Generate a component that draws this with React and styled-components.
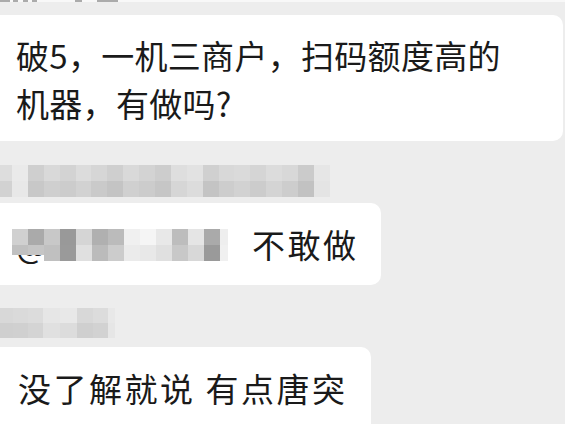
import styled, { createGlobalStyle } from "styled-components";

const GlobalStyle = createGlobalStyle`
    html, body {
        margin: 0;
        padding: 0;
        background: #ededed;
    }
    body {
        font-family: "Noto Sans CJK SC", "Noto Sans", sans-serif;
    }
`;

const Chat = styled.div`
    display: flex;
    flex-direction: column;
    align-items: flex-start;
    width: 565px;
    height: 424px;
    overflow: hidden;
    background: #ededed;
`;

const TopStrip = styled.div`
    display: flex;
    align-items: flex-end;
    align-self: stretch;
    height: 5px;
    background: #f8f8f8;
`;

const Stub = styled.span`
    display: block;
    height: 2px;
    width: ${(p) => p.w}px;
    margin-left: ${(p) => p.gap}px;
    background: #8a8a8a;
    opacity: 0.7;
`;

const Bubble = styled.div`
    display: flex;
    align-items: center;
    box-sizing: border-box;
    margin-top: ${(p) => p.top}px;
    width: ${(p) => (p.width ? `${p.width}px` : "auto")};
    padding: ${(p) => p.pad || "0 24px 0 16px"};
    background: #ffffff;
    border-radius: 0 10px 10px 0;
    color: #1a1a1a;
    font-size: 33px;
    line-height: 48px;
    letter-spacing: ${(p) => p.ls || 0}px;
    white-space: nowrap;
`;

const Mosaic = styled.div`
    display: grid;
    grid-template-columns: ${(p) => p.cols};
    grid-auto-rows: ${(p) => p.rowH}px;
    margin-top: ${(p) => p.top || 0}px;
`;

const Cell = styled.span`
    display: block;
    align-self: start;
    height: ${(p) => p.h || "100%"};
    background: ${(p) => p.c};
`;

const Mention = styled.span`
    position: relative;
    display: inline-block;
    flex: none;
    width: 216px;
    height: 48px;
    margin-left: -4px;
    margin-right: 24px;
`;

const At = styled.span`
    position: absolute;
    left: 4px;
    top: 0;
    font-size: 33px;
    line-height: 48px;
    color: #1a1a1a;
`;

const MentionMosaic = styled(Mosaic)`
    position: absolute;
    left: 0;
    top: 9px;
`;

const stubs = [
    [10, 0], [5, 3], [5, 5], [5, 4], [7, 38], [21, 15],
];

const name2 = [
    ["#dddddd", "#eaeaea", "#cfcfcf", "#d9d9d9", "#d3d3d3", "#dcdcdc", "#d6d6d6", "#cfcfcf", "#d9d9d9", "#d3d3d3", "#cdcdcd", "#dedede", "#e2e2e2", "#d0d0d0", "#d8d8d8", "#dadada", "#d5d5d5", "#dcdcdc", "#d8d8d8", "#cbcbcb", "#e6e6e6"],
    ["#d2d2d2", "#e8e8e8", "#c8c8c8", "#cfcfcf", "#cccccc", "#d2d2d2", "#cacaca", "#c4c4c4", "#d0d0d0", "#cccccc", "#c6c6c6", "#d6d6d6", "#dcdcdc", "#c4c4c4", "#cdcdcd", "#d2d2d2", "#cccccc", "#d4d4d4", "#cdcdcd", "#c2c2c2", "#e4e4e4"],
];

const name3 = [
    ["#d8d8d8", "#dadada", "#dcdcdc", "#e6e6e6", "#e8e8e8", "#d8d8d8", "#dcdcdc", "#e8e8e8"],
    ["#cfcfcf", "#d0d0d0", "#d4d4d4", "#e0e0e0", "#dcdcdc", "#cfcfcf", "#d2d2d2", "#e6e6e6"],
];

const mention = [
    ["#d0d0d0", "#aaaaaa", "#c8c8c8", "#999999", "#d5d5d5", "#b0b0b0", "#bbbbbb", "#f0f0f0", "#f5f5f5", "#e8e8e8", "#bdbdbd", "#e5e5e5", "#aaaaaa", "#eeeeee"],
    ["#c0c0c0", "#c5c5c5", "#c0c0c0", "#9a9a9a", "#e0e0e0", "#bbbbbb", "#cccccc", "#ebebeb", "#e8e8e8", "#e0e0e0", "#c8c8c8", "#d8d8d8", "#9a9a9a", "#f0f0f0"],
];

function renderCells(rows, shortCells = {}) {
    return rows.flatMap((row, r) =>
        row.map((c, i) => <Cell key={`${r}-${i}`} c={c} h={shortCells[`${r}-${i}`]} />)
    );
}

function App() {
    return (
        <>
            <GlobalStyle />
            <Chat>
                <TopStrip>
                    {stubs.map(([w, gap], i) => (
                        <Stub key={i} w={w} gap={gap} />
                    ))}
                </TopStrip>

                <Bubble top={13} width={563} ls={0.3} pad="16px 26px 14px 16px">
                    <div>
                        破5，一机三商户，扫码额度高的
                        <br />
                        机器，有做吗?
                    </div>
                </Bubble>

                <Mosaic top={24} rowH={16} cols="12px repeat(20, 15.9px)">
                    {renderCells(name2)}
                </Mosaic>

                <Bubble top={6} ls={2.5} pad="17px 22px 17px 16px">
                    <Mention>
                        <At>@</At>
                        <MentionMosaic rowH={16} cols="repeat(13, 16px) 8px">
                            {renderCells(mention, { "1-0": "10px", "1-1": "10px" })}
                        </MentionMosaic>
                    </Mention>
                    不敢做
                </Bubble>

                <Mosaic top={23} rowH={15} cols="13px 15px 15px 17px 17px 16px 15px 7px">
                    {renderCells(name3)}
                </Mosaic>

                <Bubble top={9} ls={2.5} pad="17px 24px 30px 18px">
                    没了解就说 有点唐突
                </Bubble>
            </Chat>
        </>
    );
}

export default App;
